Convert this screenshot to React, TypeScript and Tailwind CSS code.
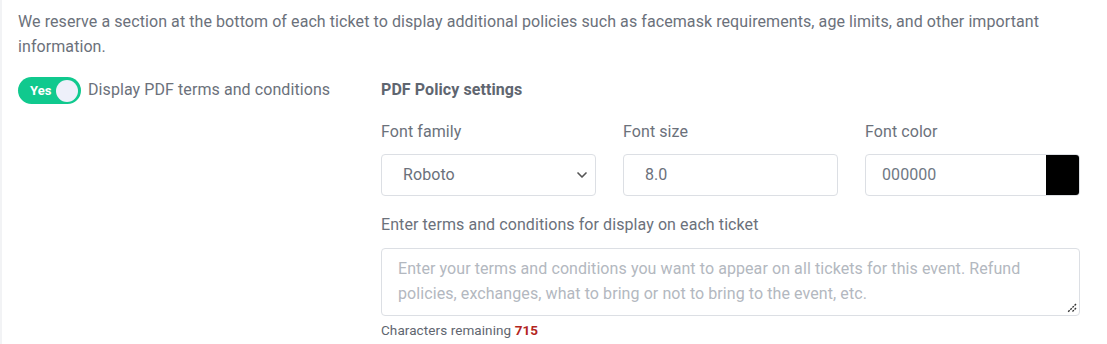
import { ChevronDown } from "lucide-react";

function Toggle() {
  return (
    <div className="flex items-center h-[27px] w-[63px] rounded-full bg-[#10c98e] pl-[12px] pr-[3px] justify-between">
      <span className="text-white text-[13px] font-bold">Yes</span>
      <span className="h-[22px] w-[22px] rounded-full bg-[#eef0fa]" />
    </div>
  );
}

export default function App() {
  return (
    <div
      className="w-[1107px] h-[344px] bg-white border-l-2 border-[#f2f3f5] text-[#6b717b] pl-[16px] pr-[27px] pt-[9px] tracking-[0.08px]"
      style={{ fontFamily: "Roboto, 'Liberation Sans', sans-serif" }}
    >
      <p className="text-[16px] leading-[25px]">
        We reserve a section at the bottom of each ticket to display additional policies such as facemask requirements, age limits, and other important
        information.
      </p>
      <div className="flex mt-[18px]">
        <div className="w-[363px] flex items-start gap-[7px]">
          <Toggle />
          <span className="text-[16px] leading-[24px] mt-[1px]">Display PDF terms and conditions</span>
        </div>
        <div className="flex-1">
          <div className="text-[16px] font-bold text-[#5f6670] leading-[24px] mt-[1px]">PDF Policy settings</div>
          <div className="grid grid-cols-3 gap-[27px] mt-[18px]">
            <div>
              <div className="text-[16px] leading-[24px]">Font family</div>
              <div className="mt-[10px] h-[42px] border border-[#dcdfe4] rounded-[4px] flex items-center justify-between pl-[21px] pr-[5px]">
                <span className="text-[16px]">Roboto</span>
                <ChevronDown size={16} strokeWidth={2.5} className="text-[#555]" />
              </div>
            </div>
            <div>
              <div className="text-[16px] leading-[24px]">Font size</div>
              <div className="mt-[10px] h-[42px] border border-[#dcdfe4] rounded-[4px] flex items-center pl-[21px]">
                <span className="text-[16px]">8.0</span>
              </div>
            </div>
            <div>
              <div className="text-[16px] leading-[24px]">Font color</div>
              <div className="mt-[10px] h-[42px] border border-[#dcdfe4] rounded-[4px] flex items-center overflow-hidden">
                <span className="text-[16px] flex-1 pl-[16px] text-[#6f7884]">000000</span>
                <span className="h-full w-[33px] bg-black" />
              </div>
            </div>
          </div>
          <div className="text-[16px] leading-[24px] mt-[17px]">Enter terms and conditions for display on each ticket</div>
          <div className="relative mt-[11px] h-[68px] border border-[#dcdfe4] rounded-[4px] px-[16px] pt-[7px]">
            <p className="text-[16px] leading-[25px] text-[#b3b8c0]">
              Enter your terms and conditions you want to appear on all tickets for this event. Refund policies, exchanges, what to bring or not to bring to the event, etc.
            </p>
            <svg className="absolute right-[2px] bottom-[2px]" width="11" height="11" viewBox="0 0 11 11">
              <path d="M10 2 L2 10 M10 6 L6 10" stroke="#333" strokeWidth="1.4" strokeDasharray="2 1" />
            </svg>
          </div>
          <div className="text-[13.5px] leading-[18px] mt-[5px] text-[#5f6670]">
            Characters remaining <span className="font-bold text-[#b3261e]">715</span>
          </div>
        </div>
      </div>
    </div>
  );
}
